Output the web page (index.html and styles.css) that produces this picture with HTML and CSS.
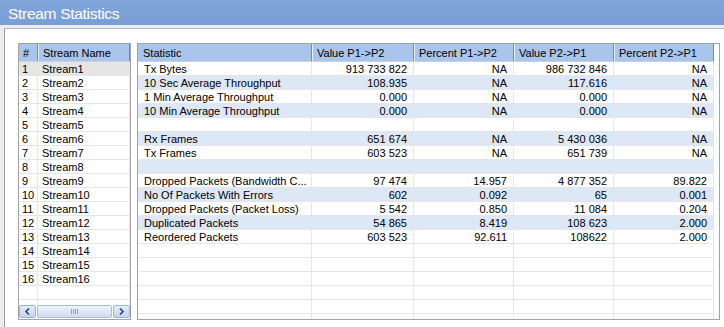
FILE: index.html
```
<!DOCTYPE html>
<html lang="en">
<head>
    <meta charset="UTF-8">
    <title>Stream Statistics</title>
    <link rel="stylesheet" href="styles.css">
</head>
<body>

    <div class="titleBar">Stream Statistics</div>

    <div class="panel">
        <div class="streamBox">
            <div class="gridHead streamCols">
                <div class="hcell">#</div>
                <div class="hcell">Stream Name</div>
            </div>
            <div class="rowsArea">
                <div class="row streamCols selected"><div class="cell">1</div><div class="cell">Stream1</div></div>
                <div class="row streamCols"><div class="cell">2</div><div class="cell">Stream2</div></div>
                <div class="row streamCols"><div class="cell">3</div><div class="cell">Stream3</div></div>
                <div class="row streamCols"><div class="cell">4</div><div class="cell">Stream4</div></div>
                <div class="row streamCols"><div class="cell">5</div><div class="cell">Stream5</div></div>
                <div class="row streamCols"><div class="cell">6</div><div class="cell">Stream6</div></div>
                <div class="row streamCols"><div class="cell">7</div><div class="cell">Stream7</div></div>
                <div class="row streamCols"><div class="cell">8</div><div class="cell">Stream8</div></div>
                <div class="row streamCols"><div class="cell">9</div><div class="cell">Stream9</div></div>
                <div class="row streamCols"><div class="cell">10</div><div class="cell">Stream10</div></div>
                <div class="row streamCols"><div class="cell">11</div><div class="cell">Stream11</div></div>
                <div class="row streamCols"><div class="cell">12</div><div class="cell">Stream12</div></div>
                <div class="row streamCols"><div class="cell">13</div><div class="cell">Stream13</div></div>
                <div class="row streamCols"><div class="cell">14</div><div class="cell">Stream14</div></div>
                <div class="row streamCols"><div class="cell">15</div><div class="cell">Stream15</div></div>
                <div class="row streamCols"><div class="cell">16</div><div class="cell">Stream16</div></div>
                <div class="row streamCols"><div class="cell"></div><div class="cell"></div></div>
                <div class="row streamCols"><div class="cell"></div><div class="cell"></div></div>
            </div>
            <div class="hScroll">
                <div class="sbButton">
                    <svg width="9" height="9" viewBox="0 0 9 9"><path d="M6 1.5 L3 4.5 L6 7.5" fill="none" stroke="#2a3f6b" stroke-width="1.6"/></svg>
                </div>
                <div class="sbThumb"><span class="grip"></span></div>
                <div class="sbButton">
                    <svg width="9" height="9" viewBox="0 0 9 9"><path d="M3 1.5 L6 4.5 L3 7.5" fill="none" stroke="#2a3f6b" stroke-width="1.6"/></svg>
                </div>
            </div>
        </div>

        <div class="statsBox">
            <div class="gridHead statCols">
                <div class="hcell">Statistic</div>
                <div class="hcell">Value P1-&gt;P2</div>
                <div class="hcell">Percent P1-&gt;P2</div>
                <div class="hcell">Value P2-&gt;P1</div>
                <div class="hcell">Percent P2-&gt;P1</div>
            </div>
            <div class="rowsArea">
                <div class="row statCols"><div class="cell">Tx Bytes</div><div class="cell num">913 733 822</div><div class="cell num">NA</div><div class="cell num">986 732 846</div><div class="cell num">NA</div></div>
                <div class="row statCols alt"><div class="cell">10 Sec Average Throughput</div><div class="cell num">108.935</div><div class="cell num">NA</div><div class="cell num">117.616</div><div class="cell num">NA</div></div>
                <div class="row statCols"><div class="cell">1 Min Average Throughput</div><div class="cell num">0.000</div><div class="cell num">NA</div><div class="cell num">0.000</div><div class="cell num">NA</div></div>
                <div class="row statCols alt"><div class="cell">10 Min Average Throughput</div><div class="cell num">0.000</div><div class="cell num">NA</div><div class="cell num">0.000</div><div class="cell num">NA</div></div>
                <div class="row statCols"><div class="cell"></div><div class="cell"></div><div class="cell"></div><div class="cell"></div><div class="cell"></div></div>
                <div class="row statCols alt"><div class="cell">Rx Frames</div><div class="cell num">651 674</div><div class="cell num">NA</div><div class="cell num">5 430 036</div><div class="cell num">NA</div></div>
                <div class="row statCols"><div class="cell">Tx Frames</div><div class="cell num">603 523</div><div class="cell num">NA</div><div class="cell num">651 739</div><div class="cell num">NA</div></div>
                <div class="row statCols alt"><div class="cell"></div><div class="cell"></div><div class="cell"></div><div class="cell"></div><div class="cell"></div></div>
                <div class="row statCols"><div class="cell">Dropped Packets (Bandwidth C...</div><div class="cell num">97 474</div><div class="cell num">14.957</div><div class="cell num">4 877 352</div><div class="cell num">89.822</div></div>
                <div class="row statCols alt"><div class="cell">No Of Packets With Errors</div><div class="cell num">602</div><div class="cell num">0.092</div><div class="cell num">65</div><div class="cell num">0.001</div></div>
                <div class="row statCols"><div class="cell">Dropped Packets (Packet Loss)</div><div class="cell num">5 542</div><div class="cell num">0.850</div><div class="cell num">11 084</div><div class="cell num">0.204</div></div>
                <div class="row statCols alt"><div class="cell">Duplicated Packets</div><div class="cell num">54 865</div><div class="cell num">8.419</div><div class="cell num">108 623</div><div class="cell num">2.000</div></div>
                <div class="row statCols"><div class="cell">Reordered Packets</div><div class="cell num">603 523</div><div class="cell num">92.611</div><div class="cell num">108622</div><div class="cell num">2.000</div></div>
                <div class="row statCols"><div class="cell"></div><div class="cell"></div><div class="cell"></div><div class="cell"></div><div class="cell"></div></div>
                <div class="row statCols"><div class="cell"></div><div class="cell"></div><div class="cell"></div><div class="cell"></div><div class="cell"></div></div>
                <div class="row statCols"><div class="cell"></div><div class="cell"></div><div class="cell"></div><div class="cell"></div><div class="cell"></div></div>
                <div class="row statCols"><div class="cell"></div><div class="cell"></div><div class="cell"></div><div class="cell"></div><div class="cell"></div></div>
                <div class="row statCols"><div class="cell"></div><div class="cell"></div><div class="cell"></div><div class="cell"></div><div class="cell"></div></div>
                <div class="row statCols"><div class="cell"></div><div class="cell"></div><div class="cell"></div><div class="cell"></div><div class="cell"></div></div>
            </div>
        </div>
    </div>

</body>
</html>
```

FILE: styles.css
```
body {
    margin: 0;
    font-family: "Liberation Sans", Arial, sans-serif;
    font-size: 11px;
    color: #000;
    background: #ececec;
    height: 327px;
    overflow: hidden;
}
.titleBar {
    height: 25px;
    box-sizing: border-box;
    padding: 2px 0 0 8px;
    line-height: 23px;
    font-size: 15.5px;
    letter-spacing: -0.3px;
    color: #fff;
    background: linear-gradient(#80a6db, #789ed4);
}
.panel {
    display: flex;
    gap: 6px;
    margin: 3px 0 0 4px;
    padding: 14px 4px 0 13px;
    height: 299px;
    box-sizing: border-box;
    background: #fff;
    border-top: 1px solid #b8bec7;
    border-left: 1px solid #9c9c9c;
}
.streamBox {
    width: 113px;
    height: 277px;
    box-sizing: border-box;
    border: 1px solid #a3a3a3;
    display: flex;
    flex-direction: column;
}
.statsBox {
    width: 583px;
    height: 277px;
    box-sizing: border-box;
    border: 1px solid #a3a3a3;
    display: flex;
    flex-direction: column;
}
.streamCols {
    display: grid;
    grid-template-columns: 19px 92px;
}
.statCols {
    display: grid;
    grid-template-columns: 174px 102px 100px 100px 100px;
    width: 576px;
}
.gridHead {
    height: 18px;
    flex: none;
    box-sizing: border-box;
    border-bottom: 1px solid #c9d3e0;
}
.hcell {
    background: #a9c5ec;
    border-right: 1px solid #7d8ba0;
    padding: 1px 0 0 4px;
    line-height: 16px;
    white-space: nowrap;
    overflow: hidden;
}
.statCols .hcell:first-child {
    padding-left: 5px;
}
.hcell + .hcell {
    border-left: 1px solid #e9f0fa;
}
.rowsArea {
    flex: 1;
    overflow: hidden;
}
.row {
    height: 14px;
    box-sizing: border-box;
    border-bottom: 1px solid #e6e6e6;
}
.row.alt {
    background: #dde7f5;
}
.row.selected {
    background: #e5e5e5;
}
.cell {
    padding: 2px 6px 0 6px;
    line-height: 11px;
    white-space: nowrap;
    border-right: 1px solid #e6e6e6;
}
.streamCols .cell {
    padding-left: 3px;
}
.streamCols .cell + .cell {
    padding-left: 4px;
}
.cell.num {
    text-align: right;
}
.hScroll {
    flex: none;
    height: 13px;
    margin-bottom: 1px;
    display: flex;
    gap: 1px;
}
.sbButton {
    width: 17px;
    box-sizing: border-box;
    border: 1px solid #9fb4d4;
    border-radius: 2px;
    background: linear-gradient(#e4edf9, #c3d5ee);
    display: flex;
    align-items: center;
    justify-content: center;
}
.sbThumb {
    flex: 1;
    box-sizing: border-box;
    border: 1px solid #a9bddb;
    border-radius: 2px;
    background: linear-gradient(#eef4fc, #cddcf1);
    display: flex;
    align-items: center;
    justify-content: center;
}
.grip {
    width: 7px;
    height: 5px;
    background: repeating-linear-gradient(90deg, #8ea4c6 0 1px, transparent 1px 2px);
}
```
